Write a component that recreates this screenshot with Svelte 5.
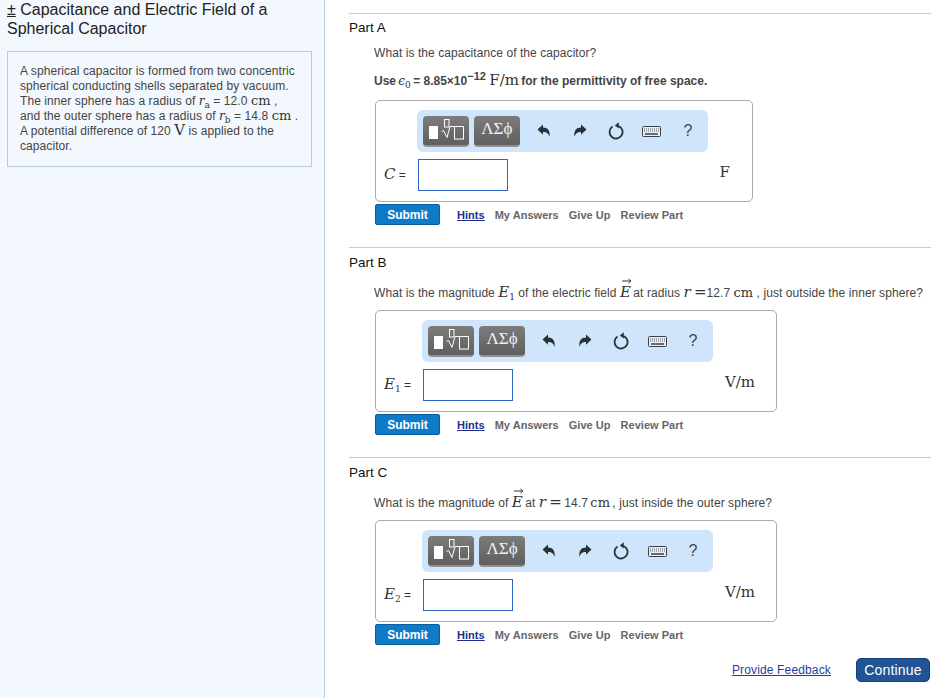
<script>
  const parts = [
    { id: 'A', wide: false, unit: 'F' },
    { id: 'B', wide: true, unit: 'V/m' },
    { id: 'C', wide: true, unit: 'V/m' }
  ];
</script>

{#snippet cm()}<span class="m up">cm</span>{/snippet}

{#snippet vec()}<span class="vec"><span class="m it big">E</span><svg class="arrow" width="10" height="6" viewBox="0 0 10 6" aria-hidden="true"><path d="M0 3h8.5M6.5 1l2.5 2-2.5 2" fill="none" stroke="#333" /></svg></span>{/snippet}

{#snippet toolbar()}
  <div class="toolbar">
    <button class="tool" aria-label="Templates">
      <svg width="46" height="31" viewBox="0 0 46 31">
        <rect x="6" y="10" width="9" height="13" fill="#fff" />
        <rect x="21.5" y="3.5" width="4.5" height="7.5" fill="none" stroke="#fff" />
        <path d="M18.5 15.5l2-1 3.5 7 3-11h13.5" fill="none" stroke="#fff" />
        <rect x="31.5" y="10.5" width="9" height="12.5" fill="none" stroke="#fff" />
      </svg>
    </button>
    <button class="tool greek">ΛΣϕ</button>
    <div class="icons">
      <svg width="14" height="14" viewBox="0 0 14 14" aria-label="Undo">
        <path d="M0.5 5.5L6 0.5V3.5C10.5 3.5 13.5 6.5 12.5 13C11.5 9.5 10 8 6 8V10.8Z" fill="#2b3138" />
      </svg>
      <svg width="14" height="14" viewBox="0 0 14 14" aria-label="Redo">
        <path d="M13.5 5.5L8 0.5V3.5C3.5 3.5 0.5 6.5 1.5 13C2.5 9.5 4 8 8 8V10.8Z" fill="#2b3138" />
      </svg>
      <svg width="16" height="18" viewBox="0 0 16 18" aria-label="Reset">
        <path d="M4.5 4.6A6.5 6.5 0 1 0 10.5 4" fill="none" stroke="#2b3138" stroke-width="1.8" />
        <path d="M10.8 0.3V6.6L6.8 3.6Z" fill="#2b3138" />
      </svg>
      <svg width="19" height="11" viewBox="0 0 19 11" aria-label="Keyboard">
        <rect x="0.5" y="0.5" width="18" height="10" rx="1" fill="#e8eef4" stroke="#3a4048" />
        <path d="M2 3h15M2 5h15" stroke="#59616a" stroke-dasharray="1 1" />
        <path d="M3 8h13" stroke="#3a4048" stroke-width="1.5" />
      </svg>
      <span class="help">?</span>
    </div>
  </div>
{/snippet}

{#snippet answer(part)}
  <div class="answer" class:wide={part.wide}>
    <span class="label">
      {#if part.id === 'A'}
        <span class="m it big">C</span> =
      {:else}
        <span class="m it big">E</span><sub class="m">{part.id === 'B' ? 1 : 2}</sub> =
      {/if}
    </span>
    {@render toolbar()}
    <input class="input" type="text" />
    <span class="unit m">{part.unit}</span>
  </div>
  <div class="actions">
    <button class="submit">Submit</button>
    <nav class="links">
      <a href="#hints" class="hints">Hints</a>
      <span>My Answers</span>
      <span>Give Up</span>
      <span>Review Part</span>
    </nav>
  </div>
{/snippet}

<div class="page">
  <aside class="side">
    <h1 class="title"><span class="pm">±</span> Capacitance and Electric Field of a Spherical Capacitor</h1>
    <div class="intro">
      A spherical capacitor is formed from two concentric spherical conducting shells separated by vacuum.
      The inner sphere has a radius of <span class="m it">r</span><sub class="m">a</sub> = 12.0 {@render cm()} ,<br />
      and the outer sphere has a radius of <span class="m it">r</span><sub class="m">b</sub> = 14.8 {@render cm()} .<br />
      A potential difference of 120 <span class="m big">V</span> is applied to the capacitor.
    </div>
  </aside>

  <main class="main">
    <section class="part first">
      <h2>Part A</h2>
      <p class="q">What is the capacitance of the capacitor?</p>
      <p class="q use">Use <span class="m it eps">ϵ</span><sub class="m">0</sub> = 8.85×10<sup>−12</sup> <span class="m big">F/m</span> for the permittivity of free space.</p>
      {@render answer(parts[0])}
    </section>

    <section class="part">
      <h2>Part B</h2>
      <p class="q">What is the magnitude <span class="m it big">E</span><sub class="m">1</sub> of the electric field {@render vec()} at radius <span class="m it big">r</span> <span class="m big">=</span>12.7 {@render cm()} , just outside the inner sphere?</p>
      {@render answer(parts[1])}
    </section>

    <section class="part">
      <h2>Part C</h2>
      <p class="q tight">What is the magnitude of {@render vec()} at <span class="m it big">r</span> <span class="m big eq">=</span> 14.7 {@render cm()} , just inside the outer sphere?</p>
      {@render answer(parts[2])}
    </section>

    <footer class="foot">
      <a href="#feedback">Provide Feedback</a>
      <button class="continue">Continue</button>
    </footer>
  </main>
</div>

<style>
  :global(body) {
    margin: 0;
    background: #fff;
    font-family: "Liberation Sans", Arial, sans-serif;
  }

  .page {
    display: flex;
    height: 698px;
    overflow: hidden;
  }

  .side {
    width: 324px;
    flex: none;
    background: #f3f8fe;
    border-right: 1px solid #b8cde0;
  }

  .title {
    margin: 0;
    padding: 0 40px 0 7px;
    font-size: 16px;
    font-weight: normal;
    line-height: 19px;
    color: #222;
  }

  .pm {
    text-decoration: underline;
    text-decoration-thickness: 1px;
    text-underline-offset: 1px;
  }

  .intro {
    width: 279px;
    margin: 13px 0 0 7px;
    padding: 12px 12px 12px 12px;
    border: 1px solid #b9cbdc;
    font-size: 12px;
    line-height: 15px;
    letter-spacing: 0.08px;
    color: #444;
  }

  .m {
    font-family: "DejaVu Serif", "Liberation Serif", serif;
    line-height: 0;
    letter-spacing: 0;
    color: #333;
  }

  .it { font-style: italic; }

  .up { font-size: 13px; }

  .big { font-size: 15px; }

  sub.m {
    font-size: 9px;
    line-height: 0;
  }

  sup {
    font-size: 11px;
    line-height: 0;
  }

  .main {
    width: 582px;
    margin-left: 24px;
    padding-top: 13px;
  }

  .part {
    border-top: 1px solid #ccc;
    margin-bottom: 22px;
  }

  h2 {
    margin: 7px 0 0;
    font-size: 13.5px;
    font-weight: normal;
    line-height: 16px;
    color: #111;
  }

  .first h2 { margin-top: 6px; }

  .q {
    margin: 13px 0 0 25px;
    font-size: 12px;
    line-height: 18px;
    letter-spacing: 0.07px;
    color: #444;
    white-space: nowrap;
  }

  .first .q { margin-top: 8px; }

  .first .use {
    margin-top: 10px;
    font-weight: bold;
    letter-spacing: 0;
  }

  .use .m { font-weight: normal; }

  .use .big { margin-right: -1px; }

  .eps { margin-left: -1px; }

  .use sub { margin-right: -1px; }

  .eq { margin-right: -1px; }

  .tight .up { margin: 0 -1px; }

  .vec {
    position: relative;
    display: inline-block;
    margin-right: -1px;
    line-height: 0;
  }

  .arrow {
    position: absolute;
    left: 2px;
    top: -14px;
  }

  .answer {
    display: grid;
    grid-template-columns: auto 90px 1fr;
    grid-template-rows: 42px 32px;
    row-gap: 7px;
    width: 376px;
    margin: 8px 0 0 26px;
    padding: 9px 0 10px;
    border: 1px solid #aaa;
    border-radius: 5px;
  }

  .answer.wide { width: 400px; }

  .use + .answer { margin-top: 10px; }

  .label {
    grid-row: 2;
    grid-column: 1;
    align-self: center;
    padding: 0 12px 0 8px;
    font-size: 12px;
    color: #333;
    white-space: nowrap;
  }

  .toolbar {
    grid-row: 1;
    grid-column: 2 / 4;
    justify-self: start;
    display: flex;
    align-items: center;
    gap: 5px;
    box-sizing: border-box;
    width: 291px;
    height: 42px;
    margin-left: -1px;
    padding-left: 6px;
    background: #cfe5fb;
    border-radius: 6px;
  }

  .tool {
    width: 46px;
    height: 31px;
    padding: 0;
    border: 0;
    border-bottom: 2px solid #8f8f8f;
    border-radius: 4px;
    background: linear-gradient(#7c7c7c, #5f5f5f);
    color: #fff;
  }

  .tool svg { display: block; }

  .greek {
    padding-bottom: 2px;
    font-family: "Liberation Serif", serif;
    font-size: 17px;
    color: #f1f1f1;
  }

  .icons {
    display: grid;
    grid-template-columns: repeat(5, 36px);
    justify-items: center;
    align-items: center;
    margin-left: 1px;
  }

  .help {
    font-size: 16px;
    color: #444;
  }

  .input {
    grid-row: 2;
    grid-column: 2;
    box-sizing: border-box;
    width: 90px;
    height: 32px;
    border: 1px solid #2e66c4;
    background: #fff;
  }

  .unit {
    grid-row: 2;
    grid-column: 3;
    justify-self: end;
    align-self: center;
    margin-bottom: 6px;
    padding-right: 22px;
    font-size: 15px;
    line-height: 16px;
  }

  .wide .unit { padding-right: 21px; }

  .actions {
    display: flex;
    align-items: center;
    margin: 2px 0 0 26px;
  }

  .submit {
    width: 65px;
    height: 21px;
    padding: 0;
    border: 1px solid #0b5f9f;
    border-radius: 2px;
    background: #0f7ac8;
    color: #fff;
    font: bold 12px "Liberation Sans", Arial, sans-serif;
  }

  .links {
    display: flex;
    gap: 10px;
    margin-left: 17px;
    font-size: 11px;
    font-weight: bold;
    letter-spacing: 0.03px;
    color: #666;
  }

  .hints { color: #1a2f8f; }

  .foot {
    display: flex;
    justify-content: flex-end;
    align-items: center;
    gap: 25px;
    margin-top: -9px;
    padding-right: 1px;
  }

  .foot a {
    font-size: 12px;
    letter-spacing: 0.15px;
    color: #1f3f9a;
  }

  .continue {
    width: 74px;
    height: 24px;
    padding: 0;
    border: 1px solid #123f7c;
    border-radius: 5px;
    background: #215496;
    color: #fff;
    font: 14px "Liberation Sans", Arial, sans-serif;
    letter-spacing: 0.2px;
  }
</style>
